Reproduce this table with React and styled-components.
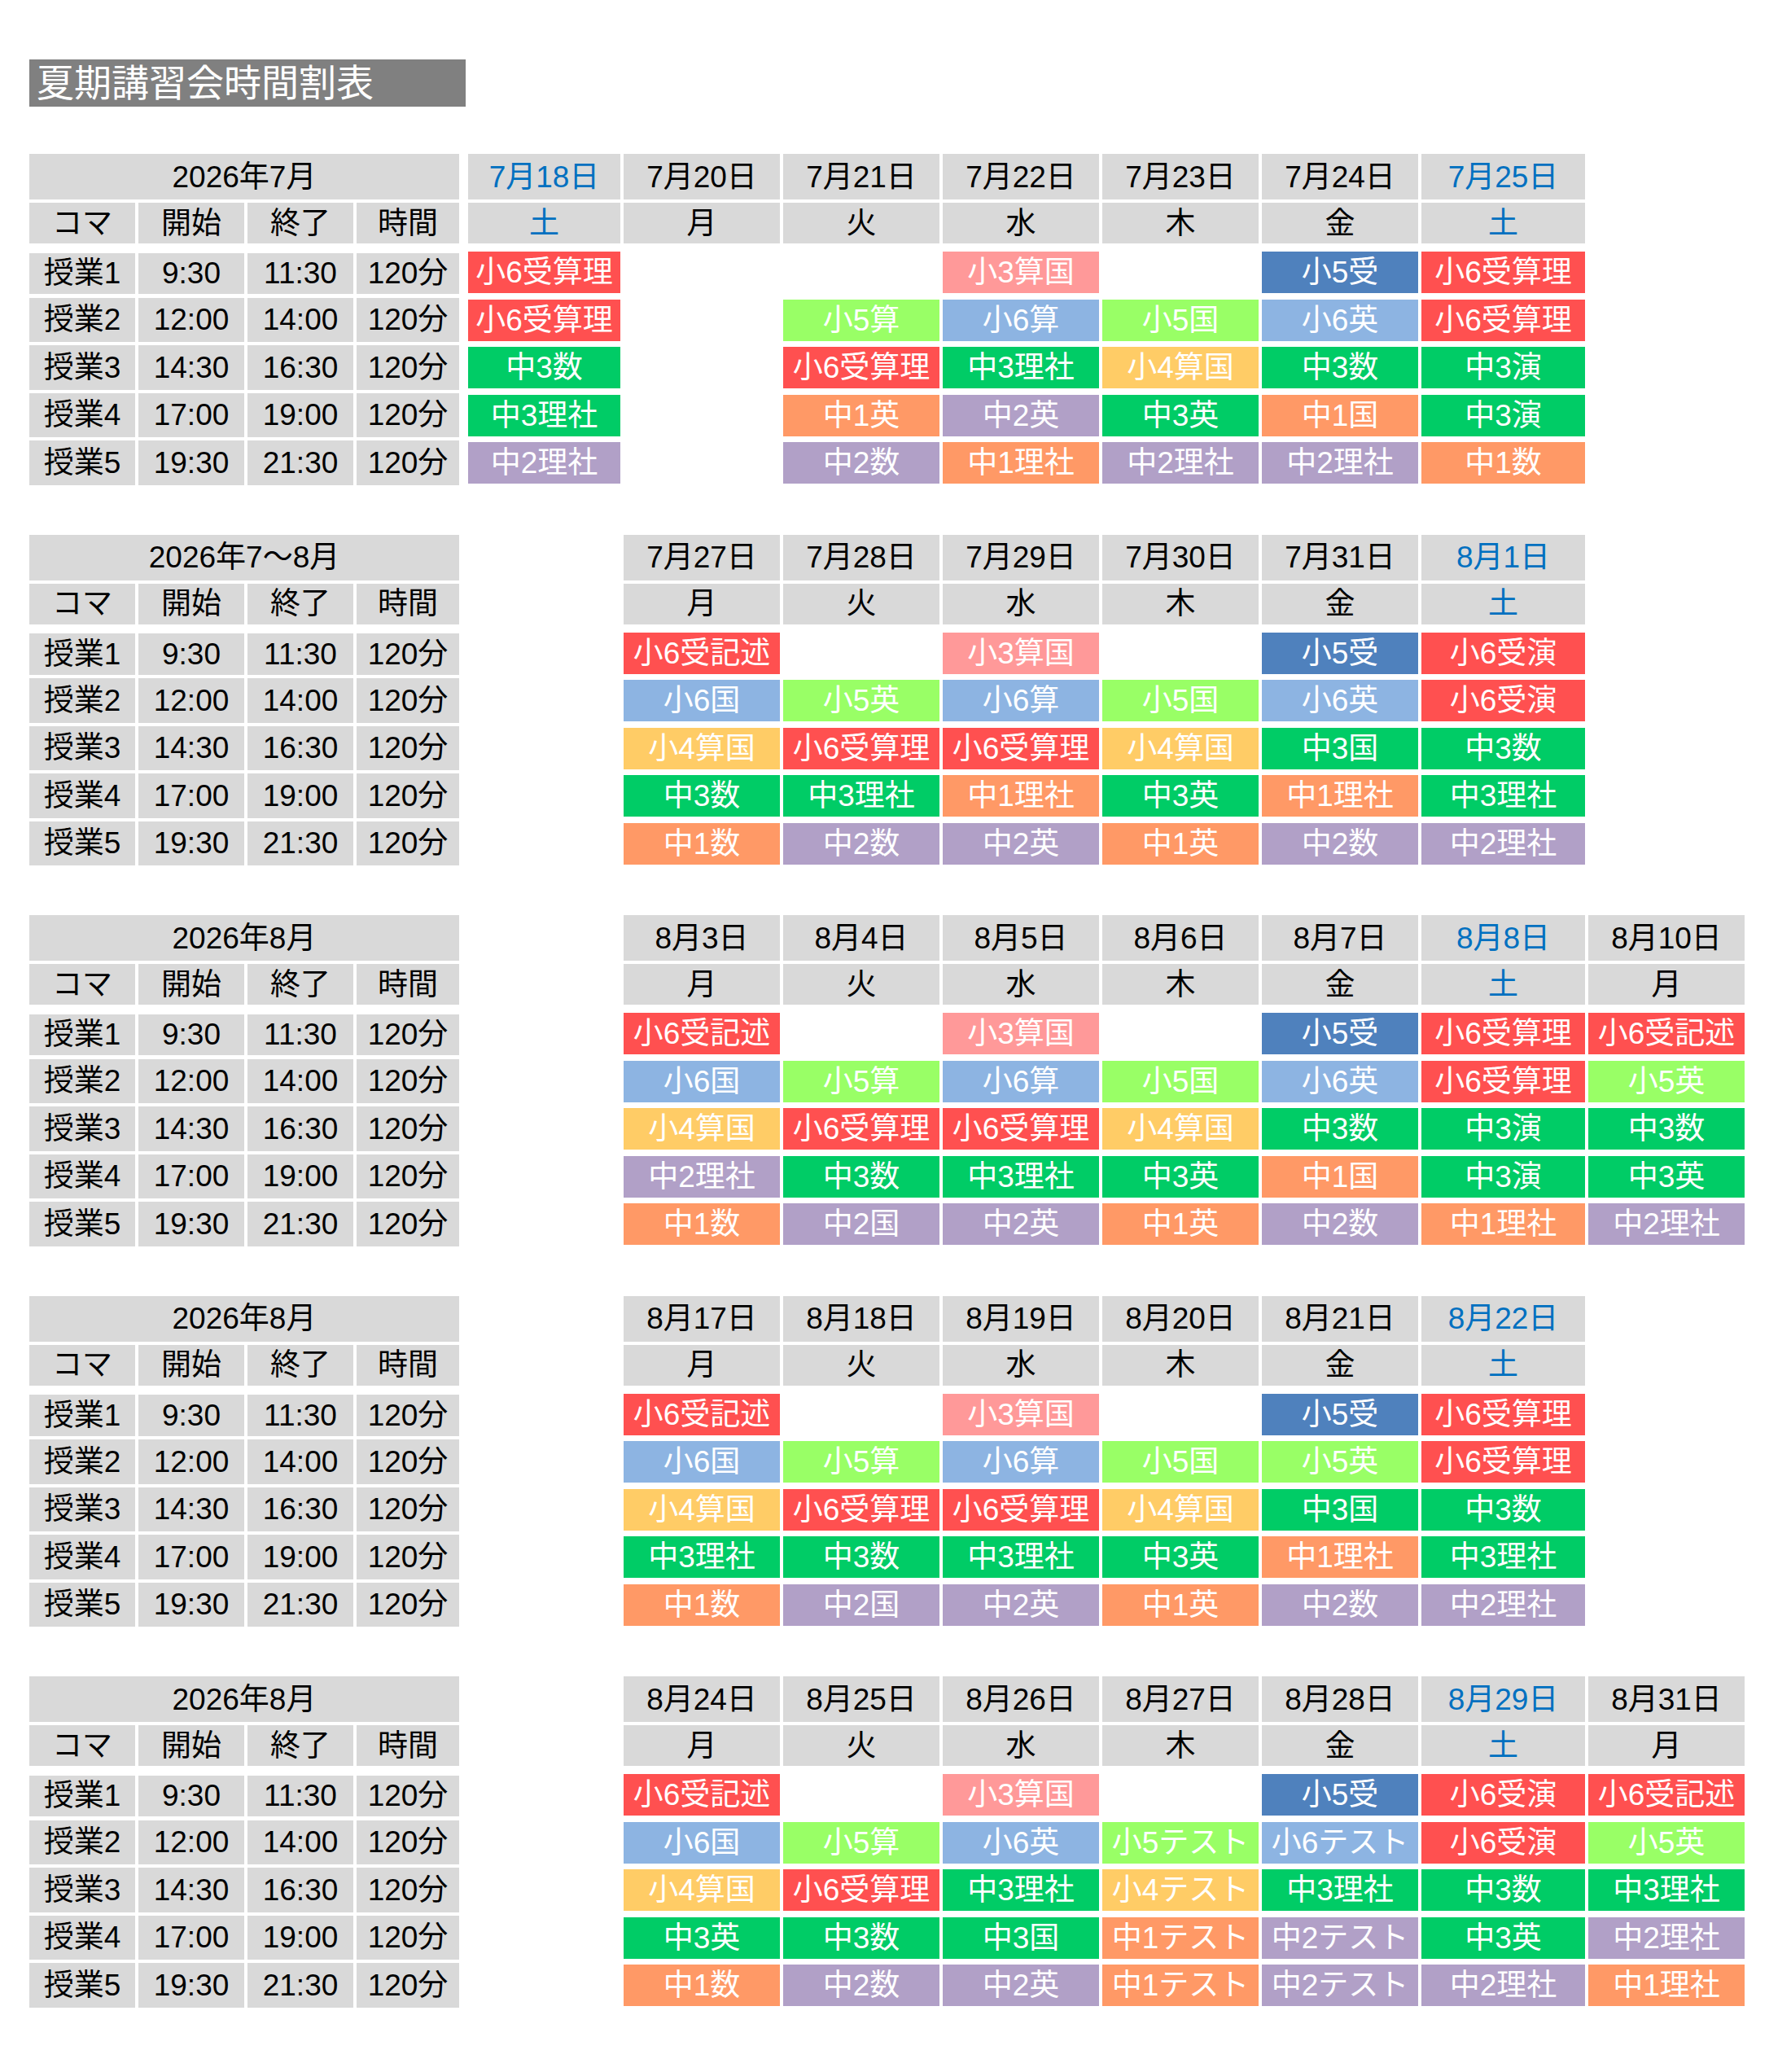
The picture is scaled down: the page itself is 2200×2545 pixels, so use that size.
import styled, { createGlobalStyle } from 'styled-components';

const GlobalStyle = createGlobalStyle`
  body {
    margin: 0;
    background: #fff;
  }
`;

const FONT = `"Liberation Sans", "Noto Sans CJK JP", sans-serif`;

const COLORS = {
  red: '#FF5050',
  pink: '#FF9999',
  navy: '#4F81BD',
  lime: '#99FF66',
  sky: '#8DB4E2',
  yellow: '#FFCC66',
  green: '#00CC66',
  orange: '#FF9966',
  purple: '#B1A0C7',
};

// subject name -> cell colour, decided by its prefix
const colorOf = name => {
  if (!name) return null;
  if (name.startsWith('小6受')) return COLORS.red;
  if (name.startsWith('小5受')) return COLORS.navy;
  if (name.startsWith('小3')) return COLORS.pink;
  if (name.startsWith('小5')) return COLORS.lime;
  if (name.startsWith('小6')) return COLORS.sky;
  if (name.startsWith('小4')) return COLORS.yellow;
  if (name.startsWith('中3')) return COLORS.green;
  if (name.startsWith('中1')) return COLORS.orange;
  if (name.startsWith('中2')) return COLORS.purple;
  return null;
};

const SLOTS = [
  ['授業1', '9:30', '11:30', '120分'],
  ['授業2', '12:00', '14:00', '120分'],
  ['授業3', '14:30', '16:30', '120分'],
  ['授業4', '17:00', '19:00', '120分'],
  ['授業5', '19:30', '21:30', '120分'],
];

const d = (date, week) => ({ date, week });

const TABLES = [
  {
    month: '2026年7月',
    days: [d('7月18日', '土'), d('7月20日', '月'), d('7月21日', '火'), d('7月22日', '水'), d('7月23日', '木'), d('7月24日', '金'), d('7月25日', '土'), null],
    lessons: [
      ['小6受算理', '', '', '小3算国', '', '小5受', '小6受算理', ''],
      ['小6受算理', '', '小5算', '小6算', '小5国', '小6英', '小6受算理', ''],
      ['中3数', '', '小6受算理', '中3理社', '小4算国', '中3数', '中3演', ''],
      ['中3理社', '', '中1英', '中2英', '中3英', '中1国', '中3演', ''],
      ['中2理社', '', '中2数', '中1理社', '中2理社', '中2理社', '中1数', ''],
    ],
  },
  {
    month: '2026年7〜8月',
    days: [null, d('7月27日', '月'), d('7月28日', '火'), d('7月29日', '水'), d('7月30日', '木'), d('7月31日', '金'), d('8月1日', '土'), null],
    lessons: [
      ['', '小6受記述', '', '小3算国', '', '小5受', '小6受演', ''],
      ['', '小6国', '小5英', '小6算', '小5国', '小6英', '小6受演', ''],
      ['', '小4算国', '小6受算理', '小6受算理', '小4算国', '中3国', '中3数', ''],
      ['', '中3数', '中3理社', '中1理社', '中3英', '中1理社', '中3理社', ''],
      ['', '中1数', '中2数', '中2英', '中1英', '中2数', '中2理社', ''],
    ],
  },
  {
    month: '2026年8月',
    days: [null, d('8月3日', '月'), d('8月4日', '火'), d('8月5日', '水'), d('8月6日', '木'), d('8月7日', '金'), d('8月8日', '土'), d('8月10日', '月')],
    lessons: [
      ['', '小6受記述', '', '小3算国', '', '小5受', '小6受算理', '小6受記述'],
      ['', '小6国', '小5算', '小6算', '小5国', '小6英', '小6受算理', '小5英'],
      ['', '小4算国', '小6受算理', '小6受算理', '小4算国', '中3数', '中3演', '中3数'],
      ['', '中2理社', '中3数', '中3理社', '中3英', '中1国', '中3演', '中3英'],
      ['', '中1数', '中2国', '中2英', '中1英', '中2数', '中1理社', '中2理社'],
    ],
  },
  {
    month: '2026年8月',
    days: [null, d('8月17日', '月'), d('8月18日', '火'), d('8月19日', '水'), d('8月20日', '木'), d('8月21日', '金'), d('8月22日', '土'), null],
    lessons: [
      ['', '小6受記述', '', '小3算国', '', '小5受', '小6受算理', ''],
      ['', '小6国', '小5算', '小6算', '小5国', '小5英', '小6受算理', ''],
      ['', '小4算国', '小6受算理', '小6受算理', '小4算国', '中3国', '中3数', ''],
      ['', '中3理社', '中3数', '中3理社', '中3英', '中1理社', '中3理社', ''],
      ['', '中1数', '中2国', '中2英', '中1英', '中2数', '中2理社', ''],
    ],
  },
  {
    month: '2026年8月',
    days: [null, d('8月24日', '月'), d('8月25日', '火'), d('8月26日', '水'), d('8月27日', '木'), d('8月28日', '金'), d('8月29日', '土'), d('8月31日', '月')],
    lessons: [
      ['', '小6受記述', '', '小3算国', '', '小5受', '小6受演', '小6受記述'],
      ['', '小6国', '小5算', '小6英', '小5テスト', '小6テスト', '小6受演', '小5英'],
      ['', '小4算国', '小6受算理', '中3理社', '小4テスト', '中3理社', '中3数', '中3理社'],
      ['', '中3英', '中3数', '中3国', '中1テスト', '中2テスト', '中3英', '中2理社'],
      ['', '中1数', '中2数', '中2英', '中1テスト', '中2テスト', '中2理社', '中1理社'],
    ],
  },
];

const Page = styled.div`
  width: 2200px;
  box-sizing: border-box;
  padding: 73px 0 60px 36px;
  font-family: ${FONT};
  color: #000;
`;

const Title = styled.h1`
  margin: 0 0 58px;
  width: 536px;
  height: 58px;
  box-sizing: border-box;
  padding-left: 9px;
  background: #808080;
  color: #fff;
  font-size: 46px;
  font-weight: 400;
  line-height: 58px;
  white-space: nowrap;
`;

const Block = styled.section`
  display: flex;
  gap: 11px;
  height: 409px;
  margin-bottom: 58.5px;
`;

const ROWS = '60px 56.5px repeat(5, 58.5px)';

const Side = styled.div`
  display: grid;
  grid-template-columns: 130px 130px 130px 126px;
  grid-template-rows: ${ROWS};
  column-gap: 4px;
`;

const Days = styled.div`
  display: grid;
  grid-template-columns: 187px repeat(5, 192px) 201px 192px;
  grid-template-rows: ${ROWS};
  column-gap: 4px;
`;

const Cell = styled.div`
  display: flex;
  align-items: center;
  justify-content: center;
  box-sizing: border-box;
  font-size: 37px;
  line-height: 1;
  white-space: nowrap;
  overflow: hidden;
`;

const Month = styled(Cell)`
  grid-column: 1 / -1;
  height: 56px;
  background: #d9d9d9;
`;

const Head = styled(Cell)`
  height: ${p => (p.$top ? 56 : 50)}px;
  background: ${p => (p.$blank ? 'transparent' : '#d9d9d9')};
  color: ${p => (p.$sat ? '#0070C0' : '#000')};
`;

const Label = styled(Cell)`
  margin-top: ${p => (p.$first ? 5 : 1.5)}px;
  height: ${p => (p.$first ? 50.5 : 54.5)}px;
  background: #d9d9d9;
`;

const Lesson = styled(Cell)`
  margin-top: 3.8px;
  height: 51px;
  background: ${p => p.$bg || 'transparent'};
  color: #fff;
`;

const Timetable = ({ table }) => (
  <Block>
    <Side>
      <Month>{table.month}</Month>
      {['コマ', '開始', '終了', '時間'].map(h => (
        <Head key={h}>{h}</Head>
      ))}
      {SLOTS.map((slot, r) =>
        slot.map((text, c) => (
          <Label key={`${r}-${c}`} $first={r === 0}>
            {text}
          </Label>
        ))
      )}
    </Side>
    <Days>
      {table.days.map((day, i) => (
        <Head key={`d${i}`} $top $blank={!day} $sat={day?.week === '土'}>
          {day?.date}
        </Head>
      ))}
      {table.days.map((day, i) => (
        <Head key={`w${i}`} $blank={!day} $sat={day?.week === '土'}>
          {day?.week}
        </Head>
      ))}
      {table.lessons.map((row, r) =>
        row.map((name, c) => (
          <Lesson key={`${r}-${c}`} $bg={colorOf(name)}>
            {name}
          </Lesson>
        ))
      )}
    </Days>
  </Block>
);

const App = () => (
  <>
    <GlobalStyle />
    <Page>
      <Title>夏期講習会時間割表</Title>
      {TABLES.map((table, i) => (
        <Timetable key={i} table={table} />
      ))}
    </Page>
  </>
);

export default App;
